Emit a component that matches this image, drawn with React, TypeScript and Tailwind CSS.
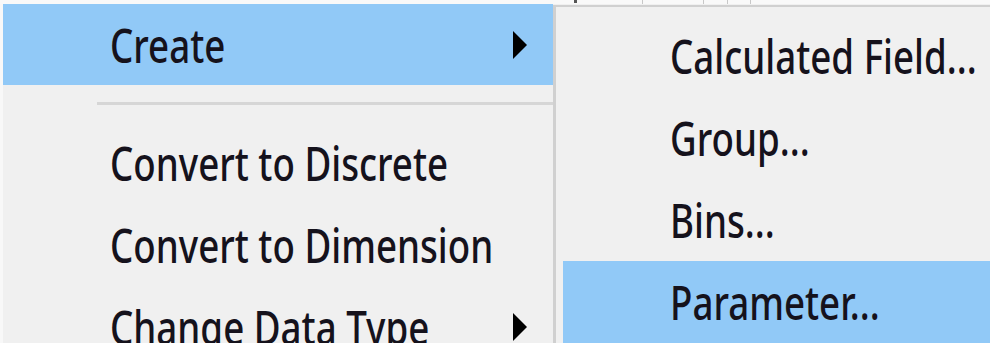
import React from "react";

const font = { fontFamily: '"Noto Sans", "Open Sans", sans-serif' };

const Arrow = () => (
  <svg width="16" height="28" viewBox="0 0 16 28" className="shrink-0">
    <path d="M1 0 L15 14 L1 28 Z" fill="#000" />
  </svg>
);

const Label = ({ children }: { children: React.ReactNode }) => (
  <span className="inline-block origin-left scale-x-[0.765] whitespace-nowrap text-[48px] font-medium leading-none text-[#15121c]">
    {children}
  </span>
);

const Row = ({
  label,
  active,
  sub,
}: {
  label: string;
  active?: boolean;
  sub?: boolean;
}) => (
  <div
    className={`flex h-[82px] items-center pl-[107px] pr-[25px] ${
      active ? "bg-[#91c9f7]" : ""
    }`}
  >
    <div className="min-w-0 flex-1">
      <Label>{label}</Label>
    </div>
    {sub && <Arrow />}
  </div>
);

export default function App() {
  return (
    <div
      className="flex h-[343px] w-[990px] flex-col overflow-hidden bg-[#f0f0f0]"
      style={font}
    >
      {/* window behind the menus */}
      <div className="relative h-[4px] shrink-0 bg-[#f9f9f9]">
        <div className="absolute left-[574px] top-0 h-[3px] w-[3px] bg-[#555]" />
        <div className="absolute left-[642px] top-0 h-[4px] w-px bg-[#c8c8c8]" />
        <div className="absolute left-[703px] top-0 h-[4px] w-px bg-[#c8c8c8]" />
        <div className="absolute left-[727px] top-0 h-[4px] w-px bg-[#c8c8c8]" />
        <div className="absolute left-[750px] top-0 h-[4px] w-px bg-[#c8c8c8]" />
      </div>

      <div className="flex flex-1">
        {/* main context menu */}
        <div className="w-[553px] shrink-0 border-l-[3px] border-[#f8f8f8]">
          <div className="flex h-[81px] items-center bg-[#91c9f7] pl-[107px] pr-[25px]">
            <div className="min-w-0 flex-1">
              <Label>Create</Label>
            </div>
            <Arrow />
          </div>
          <div className="flex h-[37px] items-center pl-[94px]">
            <div className="h-[3px] w-full bg-[#d6d6d6]" />
          </div>
          <Row label="Convert to Discrete" />
          <Row label="Convert to Dimension" />
          <Row label="Change Data Type" sub />
        </div>

        {/* submenu */}
        <div className="mt-px flex-1 border-l-[3px] border-t-[2px] border-[#d0d0d0] pl-[7px] pt-[8px]">
          <Row label="Calculated Field..." />
          <Row label="Group..." />
          <Row label="Bins..." />
          <Row label="Parameter..." active />
        </div>
      </div>
    </div>
  );
}
